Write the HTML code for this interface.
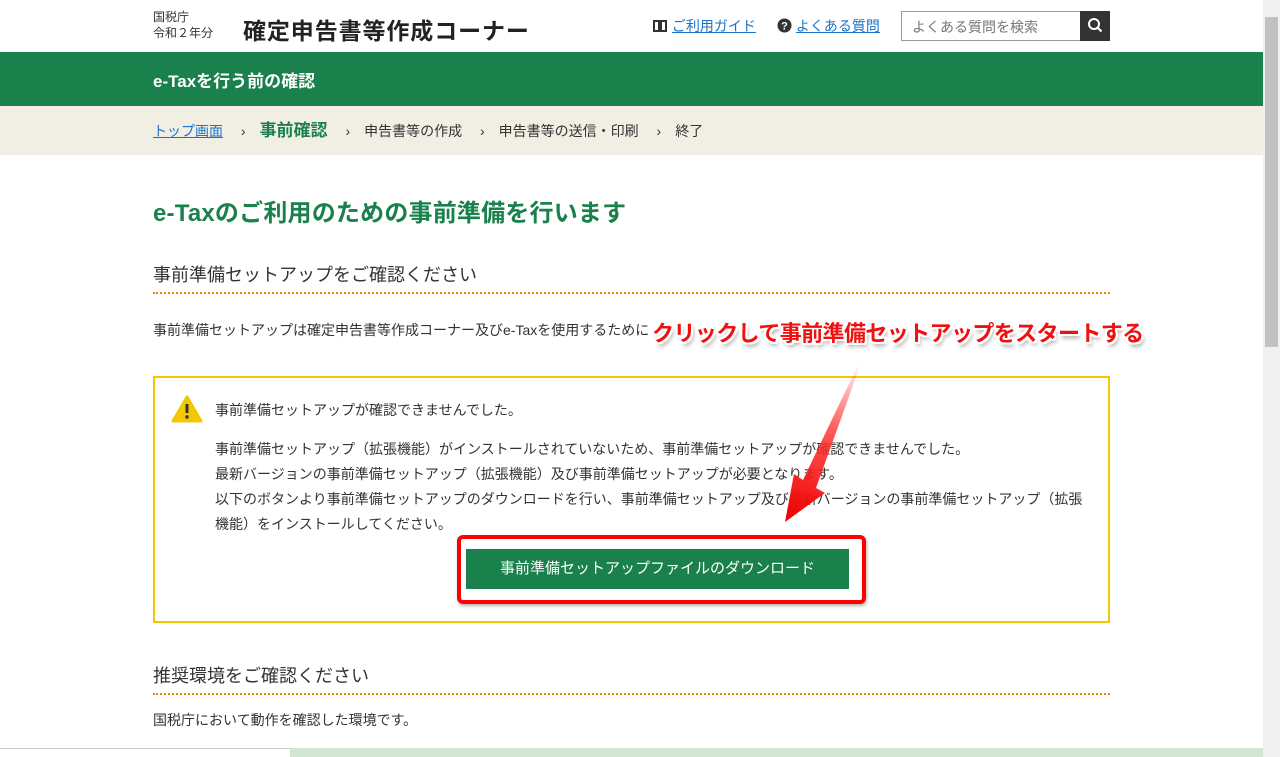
<!DOCTYPE html>
<html><head><meta charset="utf-8"><style>
*{margin:0;padding:0;box-sizing:border-box}
body{width:1280px;height:757px;overflow:hidden;background:#fff;font-family:"Liberation Sans","Noto Sans CJK JP",sans-serif;color:#333;position:relative}
.abs{position:absolute;white-space:nowrap}
a{color:#1a73c8;text-decoration:underline}
</style></head><body>
<!-- header -->
<div class="abs" style="left:153px;top:9px;font-size:12px;line-height:16px;color:#333">国税庁<br>令和２年分</div>
<div class="abs" style="left:243px;top:12px;font-size:23px;font-weight:bold;color:#222;letter-spacing:0.9px">確定申告書等作成コーナー</div>
<div class="abs" style="left:652px;top:16px;font-size:14px">
<svg width="16" height="14" viewBox="0 0 16 14" style="vertical-align:-2px"><path d="M2 2h5v10H2zM9 2h5v10H9z" fill="none" stroke="#333" stroke-width="2"/></svg> <a>ご利用ガイド</a></div>
<div class="abs" style="left:777px;top:16px;font-size:14px">
<svg width="15" height="15" viewBox="0 0 15 15" style="vertical-align:-2px"><circle cx="7.5" cy="7.5" r="7" fill="#333"/><text x="7.5" y="11.5" font-size="11" font-weight="bold" fill="#fff" text-anchor="middle" font-family="Liberation Sans">?</text></svg> <a>よくある質問</a></div>
<div class="abs" style="left:901px;top:11px;width:180px;height:30px;border:1px solid #999;font-size:14px;color:#777;padding:5px 10px">よくある質問を検索</div>
<div class="abs" style="left:1080px;top:11px;width:30px;height:30px;background:#333"><svg width="30" height="30" viewBox="0 0 30 30"><circle cx="14" cy="13" r="5" fill="none" stroke="#fff" stroke-width="2"/><path d="M17.5 16.5l4 4" stroke="#fff" stroke-width="2"/></svg></div>
<!-- green bar -->
<div class="abs" style="left:0;top:52px;width:1263px;height:54px;background:#1a804c"></div>
<div class="abs" style="left:153px;top:67px;font-size:17px;font-weight:bold;color:#fff">e-Taxを行う前の確認</div>
<!-- breadcrumb -->
<div class="abs" style="left:0;top:106px;width:1263px;height:49px;background:#f1eee4"></div>
<div class="abs" style="left:153px;top:121px;font-size:14px;color:#333;line-height:20px"><a>トップ画面</a>　 ›　<b style="color:#1a804c;font-size:17px">事前確認</b>　 ›　申告書等の作成　 ›　申告書等の送信・印刷　 ›　終了</div>
<!-- content -->
<div class="abs" style="left:153px;top:193px;font-size:24px;font-weight:bold;color:#1a804c;letter-spacing:0.2px">e-Taxのご利用のための事前準備を行います</div>
<div class="abs" style="left:153px;top:261px;font-size:18px;color:#333">事前準備セットアップをご確認ください</div>
<div class="abs" style="left:153px;top:292px;width:957px;border-top:2px dotted #e08a00"></div>
<div class="abs" style="left:153px;top:320px;font-size:14px">事前準備セットアップは確定申告書等作成コーナー及びe-Taxを使用するために</div>
<div class="abs" style="left:153px;top:376px;width:957px;height:247px;border:2px solid #f3c800"></div>
<svg class="abs" style="left:171px;top:395px" width="32" height="28" viewBox="0 0 32 28"><path d="M16 2L30 26H2z" fill="#f3c800" stroke="#f3c800" stroke-width="3" stroke-linejoin="round"/><path d="M16 9v9" stroke="#333" stroke-width="3"/><circle cx="16" cy="22" r="1.7" fill="#333"/></svg>
<div class="abs" style="left:215px;top:400px;font-size:14px">事前準備セットアップが確認できませんでした。</div>
<div class="abs" style="left:215px;top:437px;font-size:14px;line-height:25px">事前準備セットアップ（拡張機能）がインストールされていないため、事前準備セットアップが確認できませんでした。<br>最新バージョンの事前準備セットアップ（拡張機能）及び事前準備セットアップが必要となります。<br>以下のボタンより事前準備セットアップのダウンロードを行い、事前準備セットアップ及び最新バージョンの事前準備セットアップ（拡張<br>機能）をインストールしてください。</div>
<div class="abs" style="left:457px;top:535px;width:409px;height:69px;border:4px solid #f00;border-radius:6px;box-shadow:1px 2px 3px rgba(0,0,0,.3)"></div>
<div class="abs" style="left:466px;top:549px;width:383px;height:40px;background:#1a804c;color:#fff;font-size:15px;text-align:center;line-height:40px">事前準備セットアップファイルのダウンロード</div>
<svg class="abs" style="left:770px;top:360px" width="100" height="170" viewBox="0 0 100 170"><defs><linearGradient id="g" x1="90" y1="5" x2="20" y2="160" gradientUnits="userSpaceOnUse"><stop offset="0" stop-color="#f00" stop-opacity="0"/><stop offset="0.45" stop-color="#f33" stop-opacity=".85"/><stop offset="1" stop-color="#e00"/></linearGradient></defs><path d="M90 6L46 128L55 133L15 162L24 114L33 120L88 5z" fill="url(#g)"/></svg>
<div class="abs" style="left:652px;top:316px;font-size:22px;font-weight:bold;color:#f01010;letter-spacing:-0.6px;text-shadow:-2px -2px 0 #fff,2px -2px 0 #fff,-2px 2px 0 #fff,2px 2px 0 #fff,0 2px 0 #fff,0 -2px 0 #fff,2px 0 0 #fff,-2px 0 0 #fff,2px 4px 4px rgba(0,0,0,.4)">クリックして事前準備セットアップをスタートする</div>
<div class="abs" style="left:153px;top:662px;font-size:18px">推奨環境をご確認ください</div>
<div class="abs" style="left:153px;top:693px;width:957px;border-top:2px dotted #e08a00"></div>
<div class="abs" style="left:153px;top:710px;font-size:14px">国税庁において動作を確認した環境です。</div>
<!-- bottom strip -->
<div class="abs" style="left:0;top:748px;width:1263px;height:9px;background:#d3e6d3"></div>
<div class="abs" style="left:0;top:748px;width:290px;height:9px;background:#fff;border-top:1px solid #ccc"></div>
<!-- scrollbar -->
<div class="abs" style="left:1263px;top:0;width:17px;height:757px;background:#f0f0f0"></div>
<div class="abs" style="left:1265px;top:17px;width:13px;height:330px;background:#c1c1c1"></div>
</body></html>
